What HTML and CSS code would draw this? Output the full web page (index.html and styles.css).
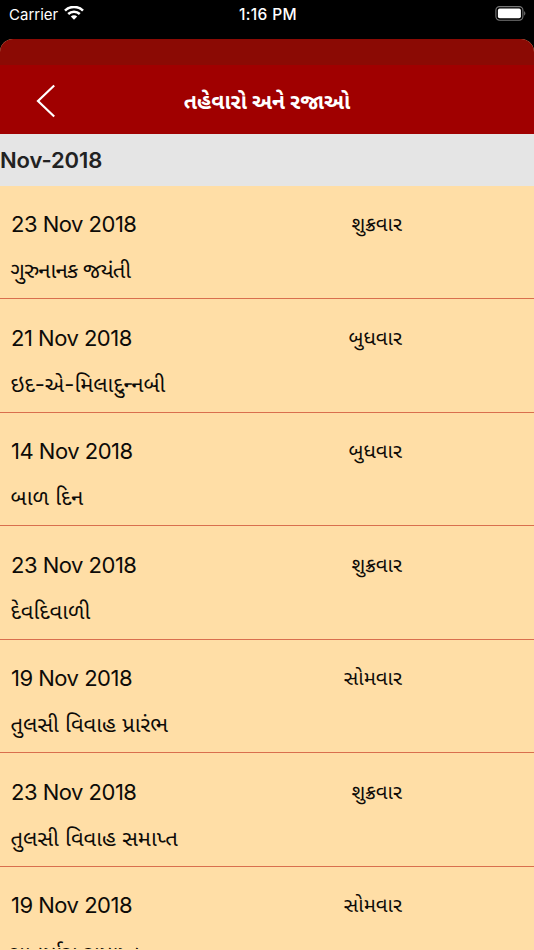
FILE: index.html
```html
<!DOCTYPE html>
<html lang="gu">
<head>
    <meta charset="UTF-8">
    <meta name="viewport" content="width=device-width, initial-scale=1.0">
    <title>તહેવારો અને રજાઓ</title>
    <link rel="stylesheet" href="styles.css">
</head>
<body>
    <div class="status-bar">
        <div class="carrier">
            <span>Carrier</span>
            <svg class="wifi" viewBox="0 0 20 14" width="20" height="14">
                <path d="M1 4.6 A13 13 0 0 1 19 4.6" fill="none" stroke="#fff" stroke-width="2.6"/>
                <path d="M4.2 8 A8.4 8.4 0 0 1 15.8 8" fill="none" stroke="#fff" stroke-width="2.5"/>
                <path d="M10 13.8 L6.8 10.6 A4.6 4.6 0 0 1 13.2 10.6 Z" fill="#fff"/>
            </svg>
        </div>
        <div class="time">1:16 PM</div>
        <div class="battery">
            <svg viewBox="0 0 32 15" width="32" height="15">
                <rect x="0.9" y="0.6" width="27" height="13.6" rx="3.6" fill="none" stroke="#777" stroke-width="1.1"/>
                <rect x="2.9" y="2.6" width="23" height="9.6" rx="1.8" fill="#fff"/>
                <path d="M29.2 5 Q31.6 7.4 29.2 9.8 Z" fill="#777"/>
            </svg>
        </div>
    </div>

    <div class="sheet">
        <div class="sheet-top"></div>
        <div class="nav-bar">
            <svg class="back" viewBox="0 0 20 34" width="20" height="34">
                <path d="M18.2 1.5 L2 17 L18.2 32.5" fill="none" stroke="#fff" stroke-width="2.2"/>
            </svg>
            <h1 class="title">તહેવારો અને રજાઓ</h1>
        </div>
        <div class="month">Nov-2018</div>
        <div class="list">
            <div class="row">
                <div class="row-top"><span class="date">23 Nov 2018</span><span class="day">શુક્રવાર</span></div>
                <div class="name tight">ગુરુનાનક જયંતી</div>
            </div>
            <div class="row">
                <div class="row-top"><span class="date">21 Nov 2018</span><span class="day">બુધવાર</span></div>
                <div class="name">ઇદ-એ-મિલાદુન્&zwj;નબી</div>
            </div>
            <div class="row">
                <div class="row-top"><span class="date">14 Nov 2018</span><span class="day">બુધવાર</span></div>
                <div class="name">બાળ દિન</div>
            </div>
            <div class="row">
                <div class="row-top"><span class="date">23 Nov 2018</span><span class="day">શુક્રવાર</span></div>
                <div class="name">દેવદિવાળી</div>
            </div>
            <div class="row">
                <div class="row-top"><span class="date">19 Nov 2018</span><span class="day">સોમવાર</span></div>
                <div class="name">તુલસી વિવાહ પ્રારંભ</div>
            </div>
            <div class="row">
                <div class="row-top"><span class="date">23 Nov 2018</span><span class="day">શુક્રવાર</span></div>
                <div class="name">તુલસી વિવાહ સમાપ્ત</div>
            </div>
            <div class="row last">
                <div class="row-top"><span class="date">19 Nov 2018</span><span class="day">સોમવાર</span></div>
                <div class="name">ચાતુર્માસ સમાપ્ત</div>
            </div>
        </div>
    </div>
</body>
</html>
```
FILE: styles.css
```css
* {
    box-sizing: border-box;
}
body {
    margin: 0;
    height: 950px;
    overflow: hidden;
    background: #000;
    color: #0d0b08;
    font-family: Inter, "Noto Sans", "Noto Sans Gujarati", sans-serif;
}
.status-bar {
    display: grid;
    grid-template-columns: 1fr auto 1fr;
    align-items: center;
    height: 39px;
    padding: 1px 7px 12px 9px;
    color: #fff;
    font-size: 15px;
}
.carrier {
    display: flex;
    align-items: center;
    gap: 6px;
}
.wifi {
    margin-top: -2px;
}
.time {
    font-size: 15.5px;
    font-weight: 500;
    letter-spacing: 0.35px;
}
.battery {
    display: flex;
    justify-content: flex-end;
    margin-top: -1px;
}
.sheet {
    height: 911px;
    overflow: hidden;
    border-radius: 13px 13px 0 0;
    background: #ffdea6;
}
.sheet-top {
    height: 26px;
    background: #8b0a04;
}
.nav-bar {
    display: grid;
    grid-template-columns: 1fr auto 1fr;
    align-items: center;
    height: 68.6px;
    padding: 4px 36px 0;
    background: #a00000;
    color: #fff;
}
.title {
    margin: 0;
    padding-top: 3px;
    font-size: 21.3px;
    font-weight: 700;
}
.month {
    height: 52px;
    padding-left: 0;
    line-height: 52px;
    font-size: 22px;
    font-weight: 600;
    letter-spacing: -0.1px;
    color: #222;
    background: #e5e5e5;
}
.row {
    height: 113.55px;
    padding: 19.4px 11px 0;
    border-bottom: 1px solid #d96f4e;
}
.row-top {
    display: flex;
    justify-content: space-between;
    width: 391px;
    height: 38px;
    line-height: 38px;
}
.date {
    font-size: 22px;
    letter-spacing: -0.5px;
}
.day {
    font-size: 20.4px;
}
.name {
    height: 55px;
    margin-left: -0.5px;
    line-height: 55px;
    font-size: 22px;
}
.tight {
    letter-spacing: -0.7px;
}
.last {
    height: 82px;
    overflow: hidden;
    border-bottom: none;
}
.last .name {
    line-height: 59px;
}
```
